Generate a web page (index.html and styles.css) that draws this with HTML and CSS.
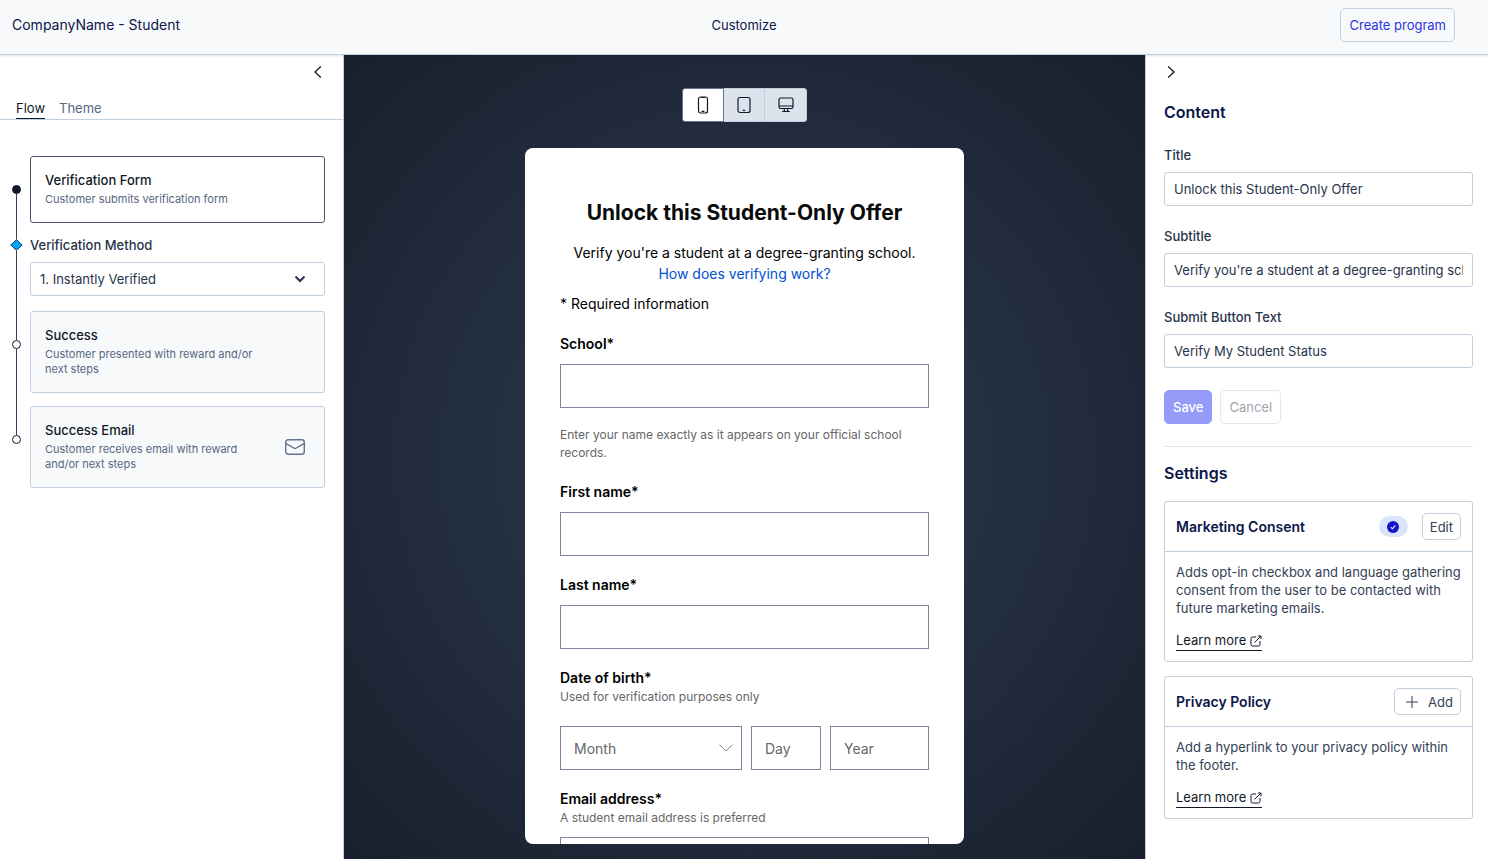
FILE: index.html
```html
<!DOCTYPE html>
<html lang="en">
<head>
<meta charset="utf-8">
<meta name="viewport" content="width=device-width, initial-scale=1">
<title>Customize program</title>
<link rel="stylesheet" href="styles.css">
</head>
<body>
<header class="topbar">
  <div class="program-name">CompanyName - Student</div>
  <div class="page-title">Customize</div>
  <div class="topbar-actions"><button type="button" class="btn btn-primary-outline">Create program</button></div>
</header>
<div class="workspace">
  <aside class="sidebar flow-panel">
    <div class="collapse-row collapse-row-end">
      <button type="button" class="icon-button" aria-label="Collapse flow panel">
        <svg width="8" height="12" viewBox="0 0 8 12"><path d="M6.8 .5 1 6l5.800 5.500"/></svg>
      </button>
    </div>
    <nav class="tabs">
      <a href="#flow" class="tab tab-active">Flow</a>
      <a href="#theme" class="tab">Theme</a>
    </nav>
    <ol class="steps">
      <li class="step">
        <div class="rail"><span class="line line-lead line-hidden"></span><span class="dot dot-filled"></span><span class="line line-fill"></span></div>
        <button type="button" class="step-card step-card-active">
          <span class="step-text"><span class="step-title">Verification Form</span><span class="step-note">Customer submits verification form</span></span>
        </button>
      </li>
      <li class="step">
        <div class="rail"><span class="line line-short"></span>
          <svg class="diamond" width="13" height="12" viewBox="0 0 13 12"><path d="M6.500.6 12.200 6 6.500 11.400.8 6z" fill="#00a6fb" stroke="#1e3a5f"/></svg>
          <span class="line line-fill"></span></div>
        <div class="method">
          <label for="method" class="label">Verification Method</label>
          <div class="select-wrap">
            <select id="method" class="control"><option>1. Instantly Verified</option></select>
            <svg class="select-icon" width="12" height="8" viewBox="0 0 12 8"><path d="M1.500 1.500 6 6l4.500-4.500" stroke-width="2"/></svg>
          </div>
        </div>
      </li>
      <li class="step step-spaced">
        <div class="rail"><span class="line line-lead"></span><span class="dot"></span><span class="line line-fill"></span></div>
        <button type="button" class="step-card">
          <span class="step-text"><span class="step-title">Success</span><span class="step-note">Customer presented with reward and/or next steps</span></span>
        </button>
      </li>
      <li class="step">
        <div class="rail"><span class="line line-lead"></span><span class="dot"></span></div>
        <button type="button" class="step-card">
          <span class="step-text"><span class="step-title">Success Email</span><span class="step-note">Customer receives email with reward and/or next steps</span></span>
          <svg class="mail" width="20" height="16" viewBox="0 0 20 16"><rect x=".7" y=".7" width="18.600" height="14.600" rx="2.500"/><path d="M.8 4.300 8.700 9q1.300.8 2.600 0l7.900-4.700"/></svg>
        </button>
      </li>
    </ol>
  </aside>

  <main class="stage">
    <div class="devices" role="group" aria-label="Preview size">
      <button type="button" class="device device-active" aria-label="Phone">
        <svg width="18" height="18" viewBox="0 0 18 18"><rect x="4.500" y="1" width="9" height="16" rx="2"/><path d="M7 1.500h4M7.500 15.300h3"/></svg>
      </button>
      <button type="button" class="device" aria-label="Tablet">
        <svg width="18" height="18" viewBox="0 0 18 18"><rect x="3" y="1.500" width="12" height="15" rx="2"/><path d="M7.800 14.300h2.400"/></svg>
      </button>
      <button type="button" class="device device-last" aria-label="Desktop">
        <svg width="18" height="18" viewBox="0 0 18 18"><rect x="2" y="2" width="14" height="10.500" rx="1.800"/><path d="M2 10h14M7.300 12.500v3M10.700 12.500v3M5.200 15.500h7.600"/></svg>
      </button>
    </div>
    <form class="preview">
      <h1 class="preview-title">Unlock this Student-Only Offer</h1>
      <p class="preview-subtitle">Verify you're a student at a degree-granting school.<br><a href="#how">How does verifying work?</a></p>
      <p class="required-note">* Required information</p>
      <div class="pfield">
        <label for="school">School*</label>
        <input id="school" class="pinput" type="text">
      </div>
      <p class="hint name-hint">Enter your name exactly as it appears on your official school records.</p>
      <div class="pfield">
        <label for="first">First name*</label>
        <input id="first" class="pinput" type="text">
      </div>
      <div class="pfield">
        <label for="last">Last name*</label>
        <input id="last" class="pinput" type="text">
      </div>
      <div class="pfield pfield-date">
        <div class="label-group"><label for="month">Date of birth*</label><p class="hint">Used for verification purposes only</p></div>
        <div class="date-row">
          <div class="select-wrap">
            <select id="month" class="pinput"><option>Month</option></select>
            <svg class="month-icon" width="14" height="8" viewBox="0 0 14 8"><path d="M.5.8 7 7 13.500.8"/></svg>
          </div>
          <input class="pinput" type="text" placeholder="Day" aria-label="Day">
          <input class="pinput" type="text" placeholder="Year" aria-label="Year">
        </div>
      </div>
      <div class="pfield">
        <div class="label-group"><label for="email">Email address*</label><p class="hint">A student email address is preferred</p></div>
        <input id="email" class="pinput" type="email">
      </div>
    </form>
  </main>

  <aside class="sidebar content-panel">
    <div class="collapse-row">
      <button type="button" class="icon-button" aria-label="Collapse content panel">
        <svg width="8" height="12" viewBox="0 0 8 12"><path d="M1.200.5 7 6l-5.800 5.500"/></svg>
      </button>
    </div>
    <h2 class="section-title">Content</h2>
    <form class="content-form">
      <div class="field"><label for="title" class="label">Title</label><input id="title" class="control" type="text" value="Unlock this Student-Only Offer"></div>
      <div class="field"><label for="subtitle" class="label">Subtitle</label><input id="subtitle" class="control" type="text" value="Verify you're a student at a degree-granting school."></div>
      <div class="field"><label for="submit" class="label">Submit Button Text</label><input id="submit" class="control" type="text" value="Verify My Student Status"></div>
      <div class="form-actions"><button type="button" class="btn btn-save">Save</button><button type="button" class="btn btn-cancel">Cancel</button></div>
    </form>
    <section class="settings">
      <h2 class="section-title">Settings</h2>
      <article class="setting">
        <div class="setting-head">
          <h3>Marketing Consent</h3>
          <span class="badge" role="img" aria-label="Enabled"><svg width="12" height="12" viewBox="0 0 12 12"><circle cx="6" cy="6" r="6" fill="#1414c8" stroke="none"/><path d="M3.800 6.200 5.400 7.800 8.300 4.300" fill="none" stroke="#dbe4fd" stroke-width="1.200"/></svg></span>
          <button type="button" class="btn btn-small">Edit</button>
        </div>
        <div class="setting-body">
          <p>Adds opt-in checkbox and language gathering consent from the user to be contacted with future marketing emails.</p>
          <a href="#consent" class="learn">Learn more <svg width="12" height="12" viewBox="0 0 12 12"><path d="M6 2H2.500Q1 2 1 3.500v6Q1 11 2.500 11h6Q10 11 10 9.500V6M4.500 7.500 11 1M7.800 1H11v3.200"/></svg></a>
        </div>
      </article>
      <article class="setting">
        <div class="setting-head">
          <h3>Privacy Policy</h3>
          <button type="button" class="btn btn-small btn-add"><svg width="12" height="12" viewBox="0 0 12 12"><path d="M6 0v12M0 6h12"/></svg>Add</button>
        </div>
        <div class="setting-body">
          <p>Add a hyperlink to your privacy policy within the footer.</p>
          <a href="#privacy" class="learn">Learn more <svg width="12" height="12" viewBox="0 0 12 12"><path d="M6 2H2.500Q1 2 1 3.500v6Q1 11 2.500 11h6Q10 11 10 9.500V6M4.500 7.500 11 1M7.800 1H11v3.200"/></svg></a>
        </div>
      </article>
    </section>
  </aside>
</div>
</body>
</html>
```
FILE: styles.css
```css
:root {
  --line: #c1cede;
  --navy: #0b1648;
  --ink: #111827;
  --text: #334155;
  --muted: #56677f;
}
* { box-sizing: border-box; }
body {
  margin: 0;
  height: 100vh;
  display: flex;
  flex-direction: column;
  overflow: hidden;
  background: #fff;
  color: var(--text);
  font: 13px/18px Inter, sans-serif;
}
h1, h2, h3, p, ol { margin: 0; padding: 0; }
ol { list-style: none; }
button, input, select { font: inherit; color: inherit; margin: 0; }
button { cursor: pointer; }
svg { display: block; flex: none; fill: none; stroke: currentColor; }

/* Top bar */
.topbar {
  display: grid;
  grid-template-columns: 1fr auto 1fr;
  align-items: center;
  padding: 8px 33px 12px 12px;
  border-bottom: 1px solid var(--line);
  box-shadow: 0 1px 2px rgba(15, 23, 42, .12);
  background: #f8f9fb;
  color: var(--navy);
  position: relative;
}
.program-name { font-size: 14px; }
.page-title { padding-left: 21px; }
.topbar-actions { text-align: right; }

.btn {
  height: 34px;
  padding: 0 8px;
  border: 1px solid var(--line);
  border-radius: 5px;
  background: #fff;
}
.btn-primary-outline { background: transparent; color: #2a35e8; }

/* Panels */
.workspace { flex: 1; min-height: 0; display: flex; }
.sidebar { flex: none; width: 344px; background: #fff; overflow: hidden; }
.flow-panel { border-right: 1px solid var(--line); }
.content-panel { width: 343px; border-left: 1px solid var(--line); padding: 0 15px 0 18px; }
.collapse-row { display: flex; padding-top: 8px; }
.collapse-row-end { justify-content: flex-end; padding-right: 18px; }
.icon-button {
  display: flex;
  padding: 3px;
  border: 0;
  background: none;
  color: var(--ink);
}
.icon-button svg { stroke-width: 1.300; }

/* Flow */
.tabs {
  display: flex;
  gap: 14px;
  padding: 18px 16px 0;
  border-bottom: 1px solid var(--line);
}
.tab { color: var(--muted); text-decoration: none; border-bottom: 1px solid transparent; line-height: 19px; }
.tab-active { color: var(--ink); border-color: var(--ink); }
.steps { padding: 36px 18px 0 0; }
.step { display: grid; grid-template-columns: 30px minmax(0, 1fr); }
.rail { display: flex; flex-direction: column; align-items: center; padding-left: 2px; }
.line { width: 1px; background: #334155; }
.line-lead { height: 29px; }
.line-short { height: 16px; }
.line-fill { flex: 1; }
.line-hidden { background: none; }
.dot { width: 9px; height: 9px; border: 1px solid var(--ink); border-radius: 50%; background: #fff; }
.dot-filled { background: var(--ink); }
.step-card {
  display: flex;
  align-items: center;
  justify-content: space-between;
  padding: 14px 19px 15px 14px;
  border: 1px solid var(--line);
  border-radius: 3px;
  background: #f8f9fb;
  text-align: left;
}
.step-card-active { background: #fff; border-color: #475569; }
.step-spaced .step-card { margin-bottom: 13px; }
.step-text { display: flex; flex-direction: column; gap: 3px; max-width: 215px; }
.step-card-active .step-text { max-width: none; }
.step-title { font-weight: 500; color: var(--ink); }
.step-note { font-size: 11px; line-height: 15px; color: var(--muted); }
.mail { color: #64748b; stroke-width: 1.400; }
.method { display: grid; gap: 8px; padding: 13px 0 15px; }
.label { font-weight: 500; color: #27344a; }

.control {
  width: 100%;
  height: 34px;
  padding: 0 9px;
  border: 1px solid var(--line);
  border-radius: 3px;
  background: #fff;
  color: #27344a;
}
.select-wrap { display: grid; align-items: center; }
.select-wrap > * { grid-area: 1 / 1; }
.select-wrap select { appearance: none; }
.select-icon { justify-self: end; margin-right: 19px; color: #27344a; pointer-events: none; }

/* Preview */
.stage {
  flex: 1;
  min-width: 0;
  display: flex;
  flex-direction: column;
  align-items: center;
  gap: 26px;
  padding: 33px 16px 15px;
  background: radial-gradient(circle, #283546 0%, #253142 40%, #191f2e 100%);
}
.devices { display: flex; flex: none; border-radius: 3px; overflow: hidden; }
.device {
  display: grid;
  place-items: center;
  width: 41px;
  height: 34px;
  padding: 0;
  border: 1px solid var(--line);
  border-left-width: 0;
  background: #dde3ed;
  color: var(--ink);
}
.device-last { width: 42px; border-radius: 0 3px 3px 0; }
.device-active { width: 42px; background: #fff; border: 1px solid #64748b; border-radius: 3px 0 0 3px; }
.device svg { stroke-width: 1.200; }

.preview {
  flex: 1;
  min-height: 0;
  width: 100%;
  max-width: 439px;
  overflow: hidden;
  padding: 51px 35px 0;
  border-radius: 8px;
  background: #fff;
  color: #000;
  font-size: 14px;
  line-height: 20px;
}
.preview-title { font-size: 21px; line-height: 28px; font-weight: 700; text-align: center; color: #0a0a0a; }
.preview-subtitle { margin-top: 15px; line-height: 21px; text-align: center; }
.preview-subtitle a { color: #0050d0; text-decoration: none; }
.required-note { margin-top: 10px; }
.preview label { font-weight: 600; display: block; }
.pfield { display: grid; gap: 10px; margin-top: 19px; }
.required-note + .pfield,
.name-hint + .pfield { margin-top: 20px; }
.pinput {
  width: 100%;
  height: 44px;
  padding: 0 13px;
  border: 1px solid #7d869c;
  border-radius: 0;
  background: #fff;
  color: #666;
}
select.pinput { padding-top: 2px; }
.pinput::placeholder { color: #666; opacity: 1; }
.hint { font-size: 12px; line-height: 18px; color: #666; }
.name-hint { margin-top: 18px; }
.pfield-date { gap: 20px; }
.date-row { display: grid; grid-template-columns: 182fr 70fr 99fr; gap: 9px; }
.month-icon { justify-self: end; margin-right: 9px; color: #7d869c; pointer-events: none; }

/* Content and settings */
.section-title { font-size: 16px; line-height: 20px; font-weight: 600; color: var(--navy); }
.collapse-row + .section-title { margin-top: 21px; }
.content-form { display: grid; gap: 21px; padding: 24px 0 22px; border-bottom: 1px solid #dbe2ec; }
.field { display: grid; gap: 8px; }
.form-actions { display: flex; gap: 8px; padding-top: 1px; }
.btn-save { border-color: #959bf8; background: #959bf8; color: #fff; font-weight: 500; }
.btn-cancel { border-color: #e2e8f0; color: #a0a6b1; }
.settings { display: grid; gap: 14px; padding-top: 16px; }
.settings .section-title { margin-bottom: 4px; }
.setting { border: 1px solid var(--line); border-radius: 3px; }
.setting-head { display: flex; align-items: center; padding: 11px; border-bottom: 1px solid var(--line); }
.setting h3 { flex: 1; font-size: 14px; line-height: 20px; font-weight: 600; color: var(--navy); }
.badge { display: grid; place-items: center; width: 29px; height: 21px; margin-right: 14px; border-radius: 11px; background: #dbe4fd; }
.btn-small { height: 27px; padding: 0 7px; }
.btn-add { display: flex; align-items: center; gap: 10px; padding-left: 11px; }
.setting-body { padding: 11px 11px 10px; }
.learn {
  display: inline-flex;
  align-items: center;
  gap: 4px;
  margin-top: 14px;
  border-bottom: 1px solid var(--ink);
  color: var(--ink);
  text-decoration: none;
  line-height: 19px;
}
```
